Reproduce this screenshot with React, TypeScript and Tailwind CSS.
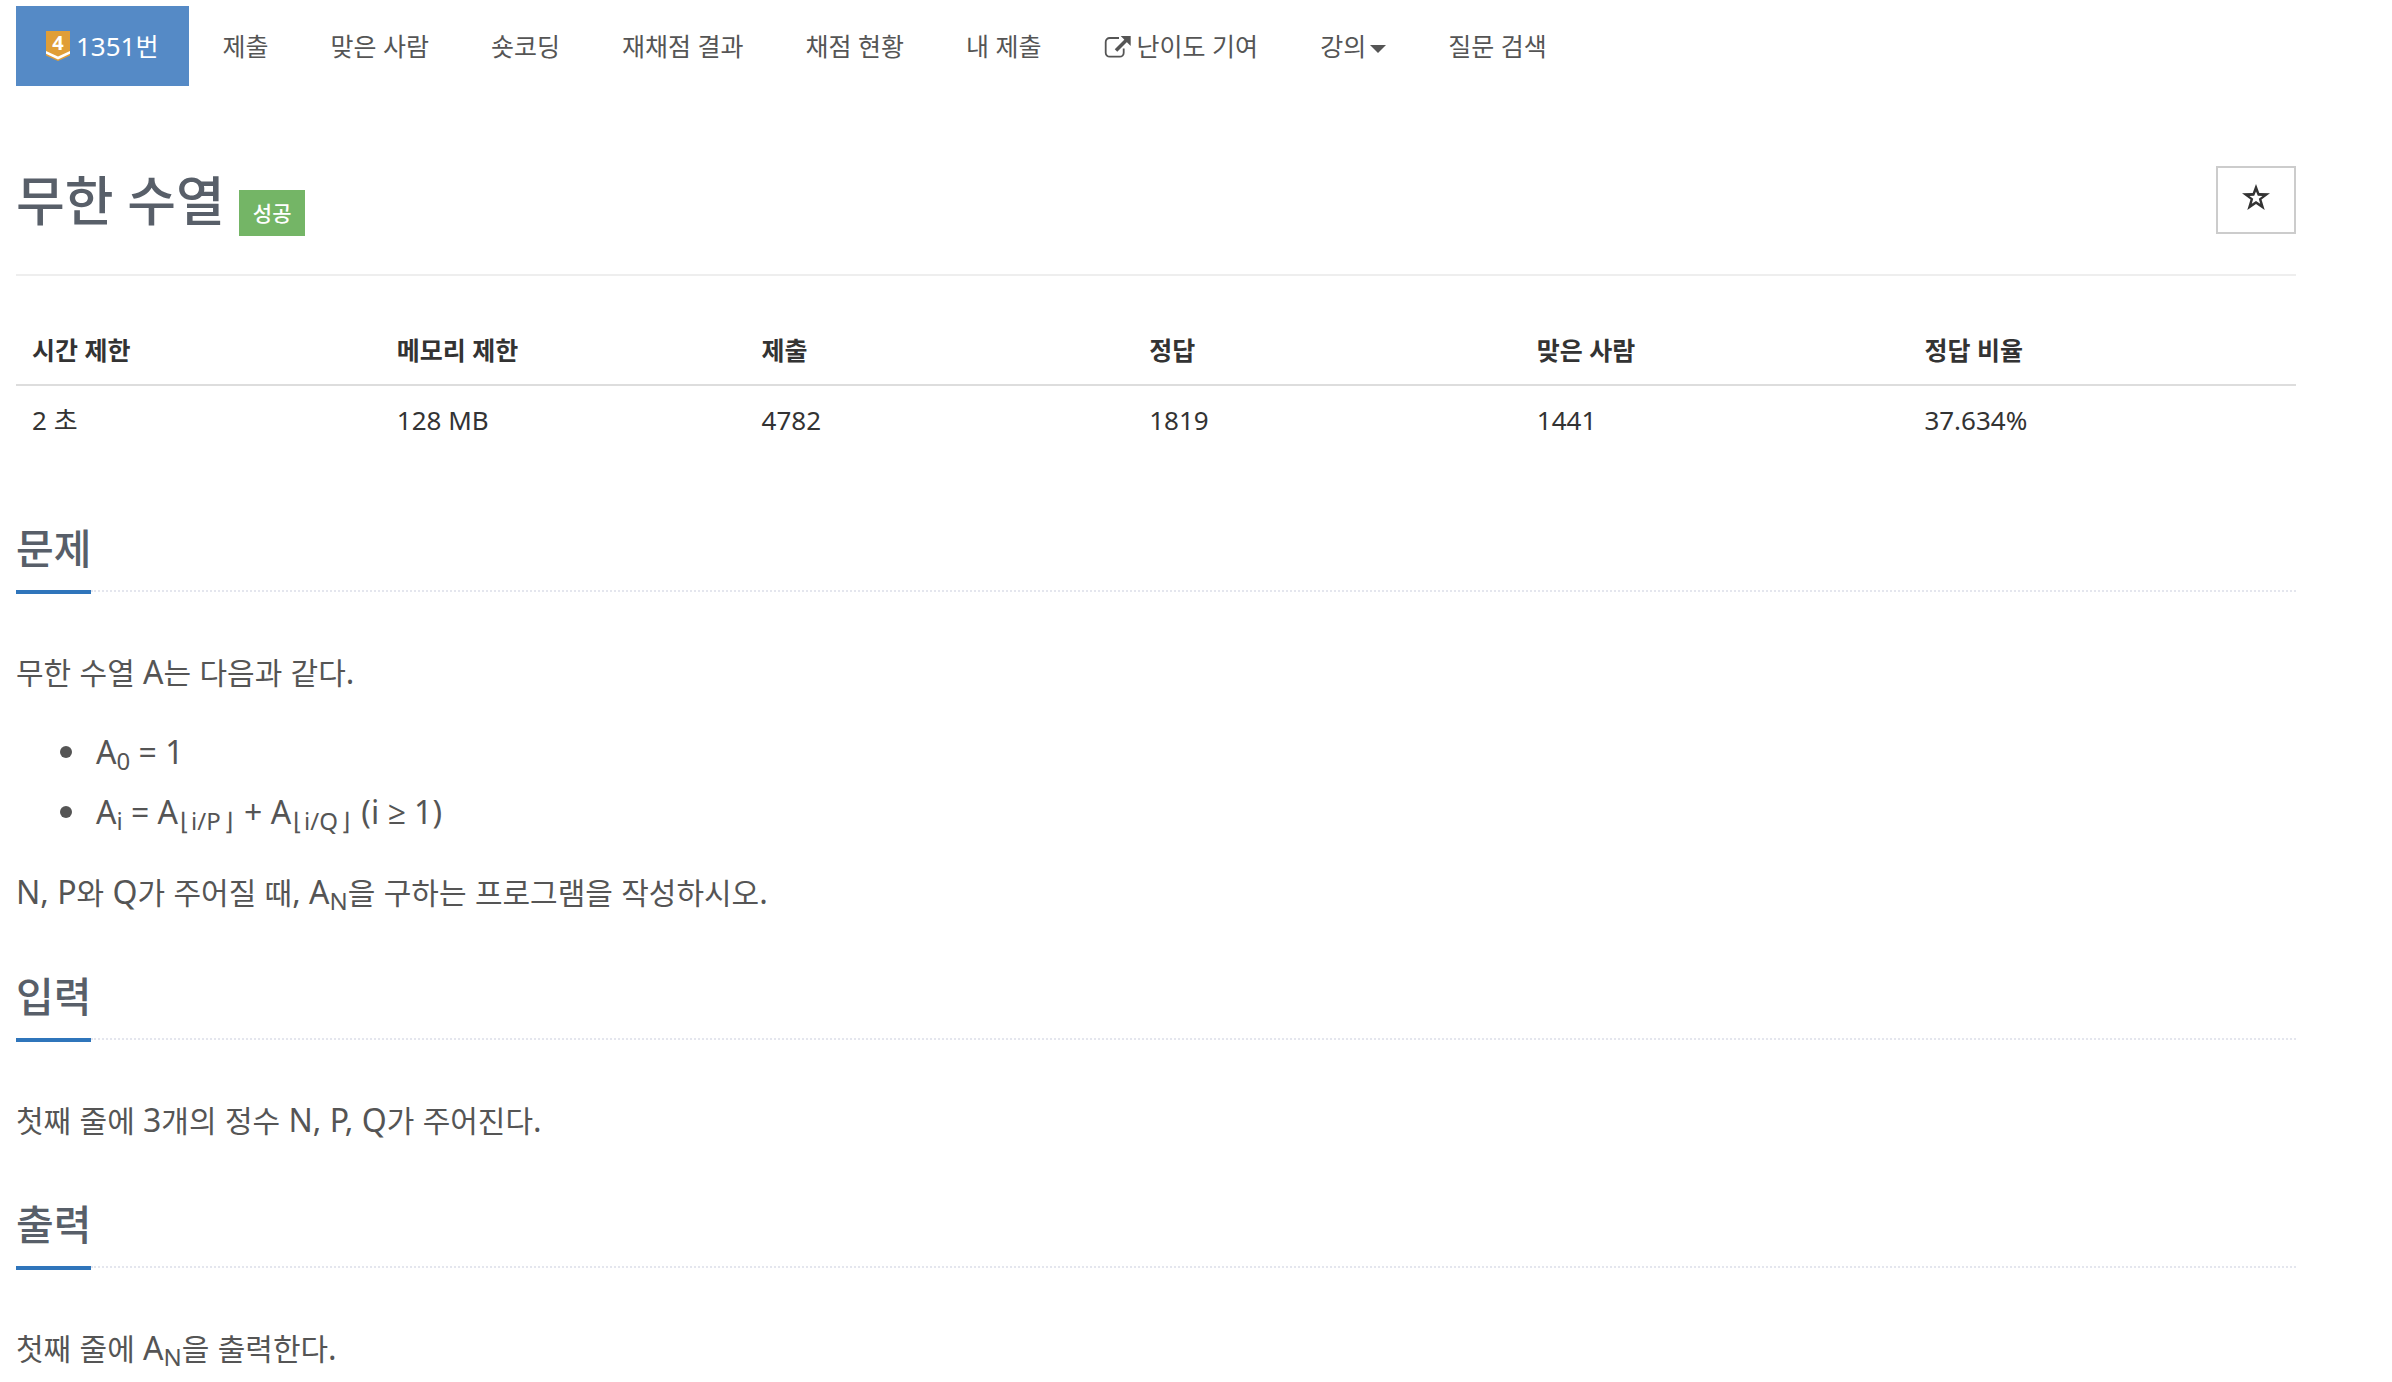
import React, { ReactNode } from "react";

const navItemClass =
  "flex h-20 items-center whitespace-nowrap px-[30px] pt-px text-[25px] text-[#555]";

function TierBadge() {
  return (
    <svg className="h-[30px] w-6 overflow-visible" viewBox="0 0 24 30" role="img" aria-label="Gold IV">
      <path d="M0 0H24V24.5L12 30L0 24.5Z" fill="#e09e37" />
      <path d="M0 20L12 25.6L24 20V22.8L12 28.4L0 22.8Z" fill="#fff" />
      <text
        x="12"
        y="19"
        textAnchor="middle"
        fill="#fff"
        fontFamily="Noto Sans, sans-serif"
        fontSize="20"
        fontWeight="700"
      >
        4
      </text>
    </svg>
  );
}

function ExternalLinkIcon() {
  return (
    <svg className="h-6 w-[27px]" viewBox="0 0 27 24" fill="none" stroke="currentColor" aria-hidden="true">
      <path
        d="M15 3H5.7A4 4 0 0 0 1.7 7V17.700A4 4 0 0 0 5.7 21.700H15.700A4 4 0 0 0 19.700 17.700V13.500"
        strokeWidth="1.800"
      />
      <path d="M12 15.500L23 4.500" strokeWidth="3.600" />
      <path d="M16.700 1H26.700V11Z" fill="currentColor" stroke="none" />
    </svg>
  );
}

function StarIcon() {
  return (
    <svg className="h-8 w-7" viewBox="0 0 28 32" aria-hidden="true">
      <path
        d="M14 0L17.300 9L28 9.300L19.500 15.500L22.700 26L14 20L5.300 26L8.500 15.500L0 9.300L10.700 9Z
           M14 7.500L15.800 11.800L20.500 12L16.800 14.800L18.200 19.700L14 17L9.800 19.700L11.200 14.800L7.500 12L12.200 11.800Z"
        fill="#333"
        fillRule="evenodd"
      />
    </svg>
  );
}

/* Hangul glyphs are set slightly smaller than the Latin text around them. */
function Mixed({ children }: { children: string }) {
  return (
    <>
      {children.split(/([가-힣]+)/).map((part, i) =>
        i % 2 === 1 ? (
          <span key={i} className="text-[30px] leading-none">
            {part}
          </span>
        ) : (
          part
        ),
      )}
    </>
  );
}

function Sub({ children }: { children: ReactNode }) {
  return <sub className="text-2xl leading-none">{children}</sub>;
}

function Floor({ children }: { children: ReactNode }) {
  return (
    <Sub>
      <span className="px-0.5">⌊</span>
      {children}
      <span className="px-[3px]">⌋</span>
    </Sub>
  );
}

function Item({ children }: { children: ReactNode }) {
  return (
    <li className="flex items-center gap-6">
      <span className="size-3 rounded-full bg-[#555]" />
      <span>{children}</span>
    </li>
  );
}

function Section({ title, children }: { title: string; children: ReactNode }) {
  return (
    <section className="mb-11">
      <div className="mb-12 flex items-start">
        <h2 className="border-b-4 border-[#2f75bb] pb-3 text-[41px] leading-[60px] font-medium text-[#585f69]">
          {title}
        </h2>
        <div className="flex-1 border-b-2 border-dotted border-[#e4e6ee] pb-3 text-[41px] leading-[60px]">
          &nbsp;
        </div>
      </div>
      <div className="flex flex-col gap-5 text-[32px] leading-[60px] text-[#555]">{children}</div>
    </section>
  );
}

const stats = [
  { label: "시간 제한", value: "2 초", width: "w-[16%]" },
  { label: "메모리 제한", value: "128 MB", width: "w-[16%]" },
  { label: "제출", value: "4782", width: "w-[17%]" },
  { label: "정답", value: "1819", width: "w-[17%]" },
  { label: "맞은 사람", value: "1441", width: "w-[17%]" },
  { label: "정답 비율", value: "37.634%", width: "w-[17%]" },
];

export default function App() {
  return (
    <div className="bg-white pt-1.5 pr-24 pl-4 font-['Noto_Sans','Open_Sans','Noto_Sans_CJK_KR',sans-serif]">
      <nav>
        <ul className="flex gap-0.5">
          <li className="mr-0.5">
            <a
              href="#problem"
              className="flex h-20 items-center gap-1.5 bg-[#558ac6] px-[30px] text-[25px] whitespace-nowrap text-white"
            >
              <TierBadge />
              <span>
                <span className="text-[26px]">1351</span>번
              </span>
            </a>
          </li>
          <li><a href="#submit" className={navItemClass}>제출</a></li>
          <li><a href="#solved" className={navItemClass}>맞은 사람</a></li>
          <li><a href="#short" className={navItemClass}>숏코딩</a></li>
          <li><a href="#rejudge" className={navItemClass}>재채점 결과</a></li>
          <li><a href="#status" className={navItemClass}>채점 현황</a></li>
          <li><a href="#mine" className={navItemClass}>내 제출</a></li>
          <li>
            <a href="#difficulty" className={`${navItemClass} gap-1.5`}>
              <ExternalLinkIcon />
              난이도 기여
            </a>
          </li>
          <li>
            <button type="button" className={`${navItemClass} gap-1`}>
              강의
              <svg className="mt-1 h-2 w-4" viewBox="0 0 16 8" aria-hidden="true">
                <path d="M0 0H16L8 8Z" fill="currentColor" />
              </svg>
            </button>
          </li>
          <li><a href="#questions" className={navItemClass}>질문 검색</a></li>
        </ul>
      </nav>

      <header className="mt-20 flex items-start justify-between border-b-2 border-[#eee] pb-[38px]">
        <div className="flex items-end gap-3.5">
          <h1 className="text-[53px] leading-[70px] font-medium text-[#585f69]">무한 수열</h1>
          <span className="bg-[#74b566] px-[14px] text-[21px] leading-[46px] font-medium text-white">성공</span>
        </div>
        <button
          type="button"
          aria-label="즐겨찾기"
          className="flex h-[68px] w-20 items-center justify-center border-2 border-[#ccc]"
        >
          <StarIcon />
        </button>
      </header>

      <table className="mt-10 mb-16 w-full table-fixed text-left leading-9 text-[#333]">
        <thead className="text-[25px]">
          <tr className="border-b-2 border-[#ddd]">
            {stats.map((s) => (
              <th key={s.label} scope="col" className={`${s.width} p-4 font-bold`}>
                {s.label}
              </th>
            ))}
          </tr>
        </thead>
        <tbody className="text-[26px]">
          <tr>
            {stats.map((s) => (
              <td key={s.label} className="p-4">{s.value}</td>
            ))}
          </tr>
        </tbody>
      </table>

      <main>
        <Section title="문제">
          <p><Mixed>무한 수열 A는 다음과 같다.</Mixed></p>
          <ul className="pl-11">
            <Item>A<Sub>0</Sub> = 1</Item>
            <Item>
              A<Sub>i</Sub> = A<Floor>i/P</Floor> + A<Floor>i/Q</Floor> (i ≥ 1)
            </Item>
          </ul>
          <p>
            <Mixed>N, P와 Q가 주어질 때, A</Mixed>
            <Sub>N</Sub>
            <Mixed>을 구하는 프로그램을 작성하시오.</Mixed>
          </p>
        </Section>
        <Section title="입력">
          <p><Mixed>첫째 줄에 3개의 정수 N, P, Q가 주어진다.</Mixed></p>
        </Section>
        <Section title="출력">
          <p>
            <Mixed>첫째 줄에 A</Mixed>
            <Sub>N</Sub>
            <Mixed>을 출력한다.</Mixed>
          </p>
        </Section>
      </main>
    </div>
  );
}
